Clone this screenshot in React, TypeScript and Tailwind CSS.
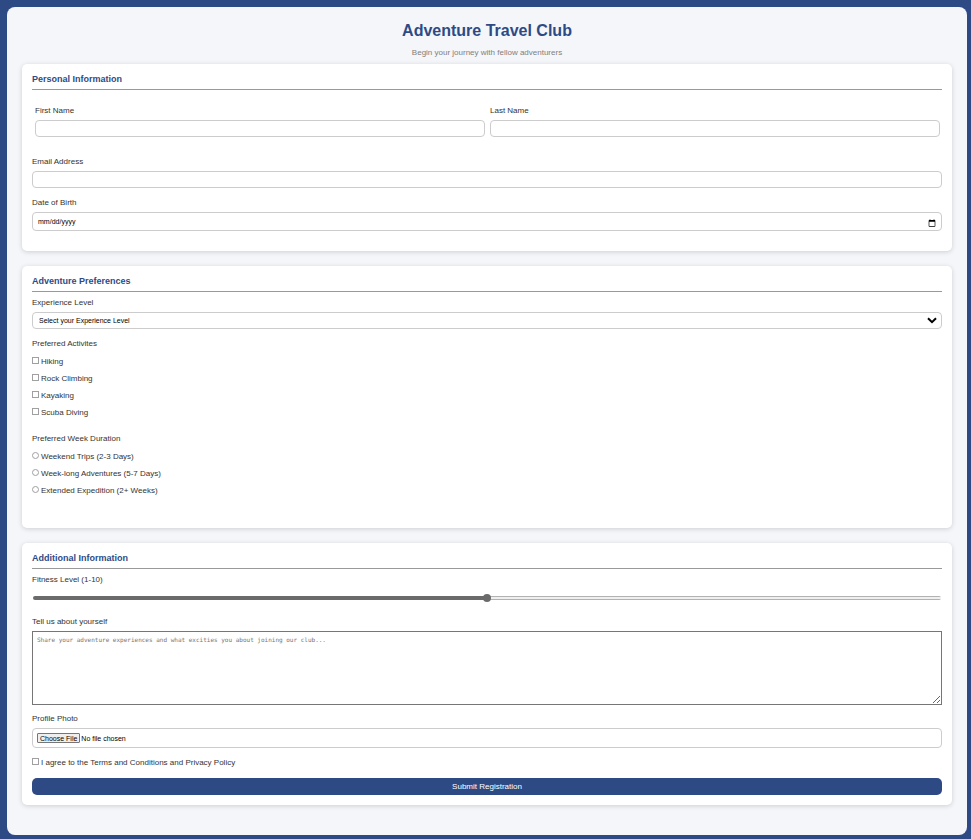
import { useState } from "react";
import type { CSSProperties, ReactNode } from "react";

const fieldClass =
  "block w-full rounded-[4px] border border-[#cccccc] bg-white text-[7px] text-black outline-none";

function Label({ htmlFor, children }: { htmlFor: string; children: ReactNode }) {
  return (
    <label htmlFor={htmlFor} className="mb-[3px] block leading-[12px]">
      {children}
    </label>
  );
}

function Card({ title, className, children }: { title: string; className: string; children: ReactNode }) {
  return (
    <section className={`rounded-[5px] bg-white px-[10px] pt-[10px] shadow-[0_1px_5px_rgba(0,0,0,0.16)] ${className}`}>
      <h2 className="border-b border-[#999999] pb-[5px] text-[9px] leading-[10px] font-bold text-[#2e4a85]">
        {title}
      </h2>
      {children}
    </section>
  );
}

function Choice({ type, name, id, label }: { type: "checkbox" | "radio"; name: string; id: string; label: string }) {
  return (
    <div className="flex h-[10px] items-start gap-[2px] leading-[12px]">
      <input
        type={type}
        name={name}
        id={id}
        className={`mt-px size-[7px] shrink-0 appearance-none border border-[#a0a0a0] bg-white checked:bg-[#2e4a85] ${
          type === "radio" ? "rounded-full" : "rounded-none"
        }`}
      />
      <label htmlFor={id}>{label}</label>
    </div>
  );
}

const activities = ["Hiking", "Rock Climbing", "Kayaking", "Scuba Diving"];
const durations = ["Weekend Trips (2-3 Days)", "Week-long Adventures (5-7 Days)", "Extended Expedition (2+ Weeks)"];

export default function App() {
  const [fitness, setFitness] = useState(5);
  const percent = fitness * 10;

  return (
    <div className="min-h-screen bg-[#2e4a85] pt-[7px] pr-1 pb-1 pl-[7px] font-['Liberation_Sans',Arial,sans-serif] text-[8px] text-[#333333]">
      <main className="rounded-lg bg-[#f4f6fa] px-[15px] pt-[14px] pb-[30px]">
        <header className="pb-[6px] text-center">
          <h1 className="text-[16px] leading-[20px] font-bold text-[#2e4a85]">Adventure Travel Club</h1>
          <p className="mt-[7px] leading-[10px] text-[#808080]">Begin your journey with fellow adventurers</p>
        </header>

        <form className="flex flex-col gap-[15px]" onSubmit={(e) => e.preventDefault()}>
          <Card title="Personal Information" className="pb-[20px]">
            <div className="grid grid-cols-2 gap-[5px] pt-[15px] pr-[2px] pl-[3px]">
              <div>
                <Label htmlFor="first">First Name</Label>
                <input id="first" type="text" className={`${fieldClass} h-[17px] px-[5px]`} />
              </div>
              <div>
                <Label htmlFor="last">Last Name</Label>
                <input id="last" type="text" className={`${fieldClass} h-[17px] px-[5px]`} />
              </div>
            </div>
            <div className="mt-[19px]">
              <Label htmlFor="email">Email Address</Label>
              <input id="email" type="email" className={`${fieldClass} h-[17px] px-[5px]`} />
            </div>
            <div className="mt-[9px]">
              <Label htmlFor="dob">Date of Birth</Label>
              <input
                id="dob"
                type="date"
                className={`${fieldClass} h-[19px] px-[5px] pt-[2px] [&::-webkit-calendar-picker-indicator]:size-[8px] [&::-webkit-calendar-picker-indicator]:p-0 [&::-webkit-datetime-edit-day-field]:p-0 [&::-webkit-datetime-edit-month-field]:p-0 [&::-webkit-datetime-edit-year-field]:p-0`}
              />
            </div>
          </Card>

          <Card title="Adventure Preferences" className="pb-[33px]">
            <div className="mt-[5px]">
              <Label htmlFor="level">Experience Level</Label>
              <div className="relative">
                <select id="level" defaultValue="" className={`${fieldClass} h-[17px] appearance-none px-[6px] pt-[2px]`}>
                  <option value="">Select your Experience Level</option>
                  <option value="beginner">Beginner</option>
                  <option value="intermediate">Intermediate</option>
                  <option value="advanced">Advanced</option>
                </select>
                <svg
                  viewBox="0 0 10 7"
                  className="pointer-events-none absolute top-[5px] right-[5px] h-[7px] w-[10px]"
                  fill="none"
                  stroke="black"
                  strokeWidth="2"
                >
                  <path d="M1 1.2 L5 5.2 L9 1.2" />
                </svg>
              </div>
            </div>
            <fieldset className="mt-[9px]">
              <legend className="block leading-[12px]">Preferred Activites</legend>
              <div className="mt-[6px] flex flex-col gap-[7px]">
                {activities.map((a) => (
                  <Choice key={a} type="checkbox" name="activities" id={a} label={a} />
                ))}
              </div>
            </fieldset>
            <fieldset className="mt-[16px]">
              <legend className="block leading-[12px]">Preferred Week Duration</legend>
              <div className="mt-[6px] flex flex-col gap-[7px]">
                {durations.map((d) => (
                  <Choice key={d} type="radio" name="duration" id={d} label={d} />
                ))}
              </div>
            </fieldset>
          </Card>

          <Card title="Additional Information" className="pb-[10px]">
            <div className="mt-[5px]">
              <Label htmlFor="fitness">Fitness Level (1-10)</Label>
              <div className="px-px pt-[5px]">
                <input
                  id="fitness"
                  type="range"
                  min={0}
                  max={10}
                  value={fitness}
                  onChange={(e) => setFitness(Number(e.target.value))}
                  className="block h-[8px] w-full appearance-none bg-transparent [&::-webkit-slider-runnable-track]:h-[4px] [&::-webkit-slider-runnable-track]:rounded-full [&::-webkit-slider-runnable-track]:[background:var(--track)] [&::-webkit-slider-thumb]:mt-[-2px] [&::-webkit-slider-thumb]:size-[8px] [&::-webkit-slider-thumb]:appearance-none [&::-webkit-slider-thumb]:rounded-full [&::-webkit-slider-thumb]:bg-[#6b6b6b]"
                  style={
                    {
                      "--track": `linear-gradient(to right, #6b6b6b ${percent}%, transparent ${percent}%), linear-gradient(#b2b2b2 1px, #efefef 1px 3px, #b2b2b2 3px)`,
                    } as CSSProperties
                  }
                />
              </div>
            </div>
            <div className="mt-[14px]">
              <Label htmlFor="about">Tell us about yourself</Label>
              <textarea
                id="about"
                placeholder="Share your adventure experiences and what excities you about joining our club..."
                className="block h-[74px] w-full resize border border-[#767676] bg-white p-[4px] font-['DejaVu_Sans_Mono',monospace] text-[6px] leading-[7px] outline-none placeholder:text-[#757575]"
              />
            </div>
            <div className="mt-[8px]">
              <Label htmlFor="photo">Profile Photo</Label>
              <input
                id="photo"
                type="file"
                className={`${fieldClass} h-[20px] px-[4px] py-[4px] leading-[9px] file:mr-[1px] file:h-[10px] file:rounded-[1px] file:border file:border-solid file:border-[#767676] file:bg-[#efefef] file:px-[2px] file:text-[7px] file:leading-[9px] file:text-black`}
              />
            </div>
            <div className="mt-[9px]">
              <Choice type="checkbox" name="terms" id="terms" label="I agree to the Terms and Conditions and Privacy Policy" />
            </div>
            <button type="submit" className="mt-[11px] block h-[17px] w-full rounded-[5px] bg-[#2e4a85] text-[8px] leading-[10px] text-white">
              Submit Registration
            </button>
          </Card>
        </form>
      </main>
    </div>
  );
}
